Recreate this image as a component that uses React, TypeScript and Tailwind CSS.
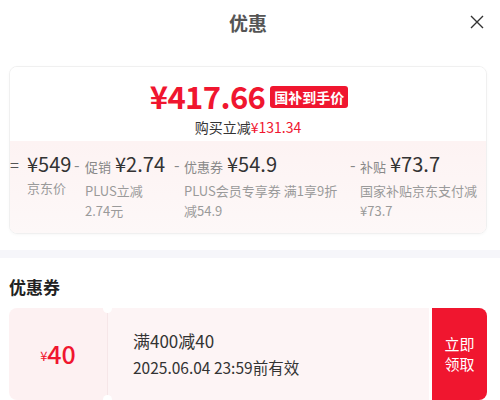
import React from "react";

const F = { fontFamily: '"Noto Sans CJK SC", "Noto Sans", sans-serif' };

export default function App() {
  return (
    <div className="w-[500px] h-[400px] overflow-hidden bg-white relative" style={F}>
      {/* header */}
      <div className="h-[44px] flex items-center justify-center relative">
        <div className="text-[19px] font-bold text-[#555] leading-none ml-[-4px]">优惠</div>
        <button className="absolute right-[14px] top-[13px] w-[18px] h-[18px] flex items-center justify-center">
          <svg width="16" height="16" viewBox="0 0 16 16" fill="none" stroke="#333" strokeWidth="1.4">
            <path d="M2 2 L14 14 M14 2 L2 14" />
          </svg>
        </button>
      </div>

      {/* price card */}
      <div className="ml-[9px] mt-[22px] w-[478px] rounded-[8px] border border-[#f0f0f0] overflow-hidden shadow-[0_1px_3px_rgba(0,0,0,0.03)]">
        <div className="pt-[6px] pb-[4px] flex flex-col items-center bg-white">
          <div className="flex items-center gap-[5px] h-[45px] pl-[2px]">
            <span className="text-[31px] font-bold text-[#f0162f] leading-[45px] tracking-[-0.6px]">¥417.66</span>
            <span className="bg-[#f0162f] text-white text-[14px] font-bold leading-[22px] px-[4px] rounded-[3px] mt-[2px]">国补到手价</span>
          </div>
          <div className="text-[14px] leading-[19px] text-[#333]">
            购买立减<span className="text-[#f0162f]">¥131.34</span>
          </div>
        </div>
        <div className="bg-gradient-to-b from-[#fdf3f3] to-[#fdf8f8] pt-[11px] pb-[12px] flex text-[13px] text-[#9a9a9a]">
          <Item op="=" opW="w-[17px]" w="w-[64px]" label="" price="¥549" sub={["京东价"]} dark />
          <Item op="-" opW="w-[11px]" w="w-[100px]" label="促销" price="¥2.74" sub={["PLUS立减", "2.74元"]} />
          <Item op="-" opW="w-[10px]" w="w-[176px]" label="优惠券" price="¥54.9" sub={["PLUS会员专享券 满1享9折", "减54.9"]} />
          <Item op="-" opW="w-[10px]" w="flex-1" label="补贴" price="¥73.7" sub={["国家补贴京东支付减", "¥73.7"]} />
        </div>
      </div>

      {/* gray band */}
      <div className="mt-[16px] h-[8px] bg-[#f6f6fa]" />

      {/* coupons */}
      <div className="ml-[9px] mt-[17px] text-[17px] font-bold text-[#222] leading-[24px]">优惠券</div>
      <div className="ml-[9px] mt-[9px] w-[478px] h-[92px] flex">
        <div className="w-[98px] bg-[#fdf1f2] rounded-l-[8px] flex items-center justify-center text-[#f0162f] pb-[2px]">
          <span className="text-[13px] mt-[6px]">¥</span>
          <span className="text-[25px] font-medium leading-none">40</span>
        </div>
        <div className="relative w-[1px] bg-[#f6e6e8]">
          <div className="absolute -top-[4px] -left-[4px] w-[9px] h-[9px] rounded-full bg-white" />
          <div className="absolute -bottom-[4px] -left-[4px] w-[9px] h-[9px] rounded-full bg-white" />
        </div>
        <div className="flex-1 bg-[#fdf4f5] flex flex-col justify-center pl-[25px]">
          <div className="text-[17px] text-[#333] leading-[24px]">满400减40</div>
          <div className="text-[15.5px] text-[#333] leading-[24px] mt-[2px]">2025.06.04 23:59前有效</div>
        </div>
        <div className="w-[3px] bg-white" />
        <div className="w-[55px] bg-[#f0162f] rounded-r-[8px] flex items-center justify-center">
          <div className="text-white text-[15px] leading-[20px] text-center">立即<br />领取</div>
        </div>
      </div>
    </div>
  );
}

function Item({ op, opW, w, label, price, sub, dark }: { op: string; opW: string; w: string; label: string; price: string; sub: string[]; dark?: boolean }) {
  return (
    <div className={`${w} flex`}>
      <div className={`${opW} shrink-0 text-[16px] leading-[24px] ${dark ? "text-[#555]" : "text-[#888]"}`}>{op}</div>
      <div className="flex flex-col">
        <div className="flex items-baseline leading-[24px] whitespace-nowrap">
          {label && <span className="text-[13px] text-[#888] mr-[4px]">{label}</span>}
          <span className="text-[20px] text-[#333] font-normal">{price}</span>
        </div>
        <div className="mt-[2px] leading-[20px]">
          {sub.map((s, i) => (
            <div key={i} className="whitespace-nowrap">{s}</div>
          ))}
        </div>
      </div>
    </div>
  );
}
